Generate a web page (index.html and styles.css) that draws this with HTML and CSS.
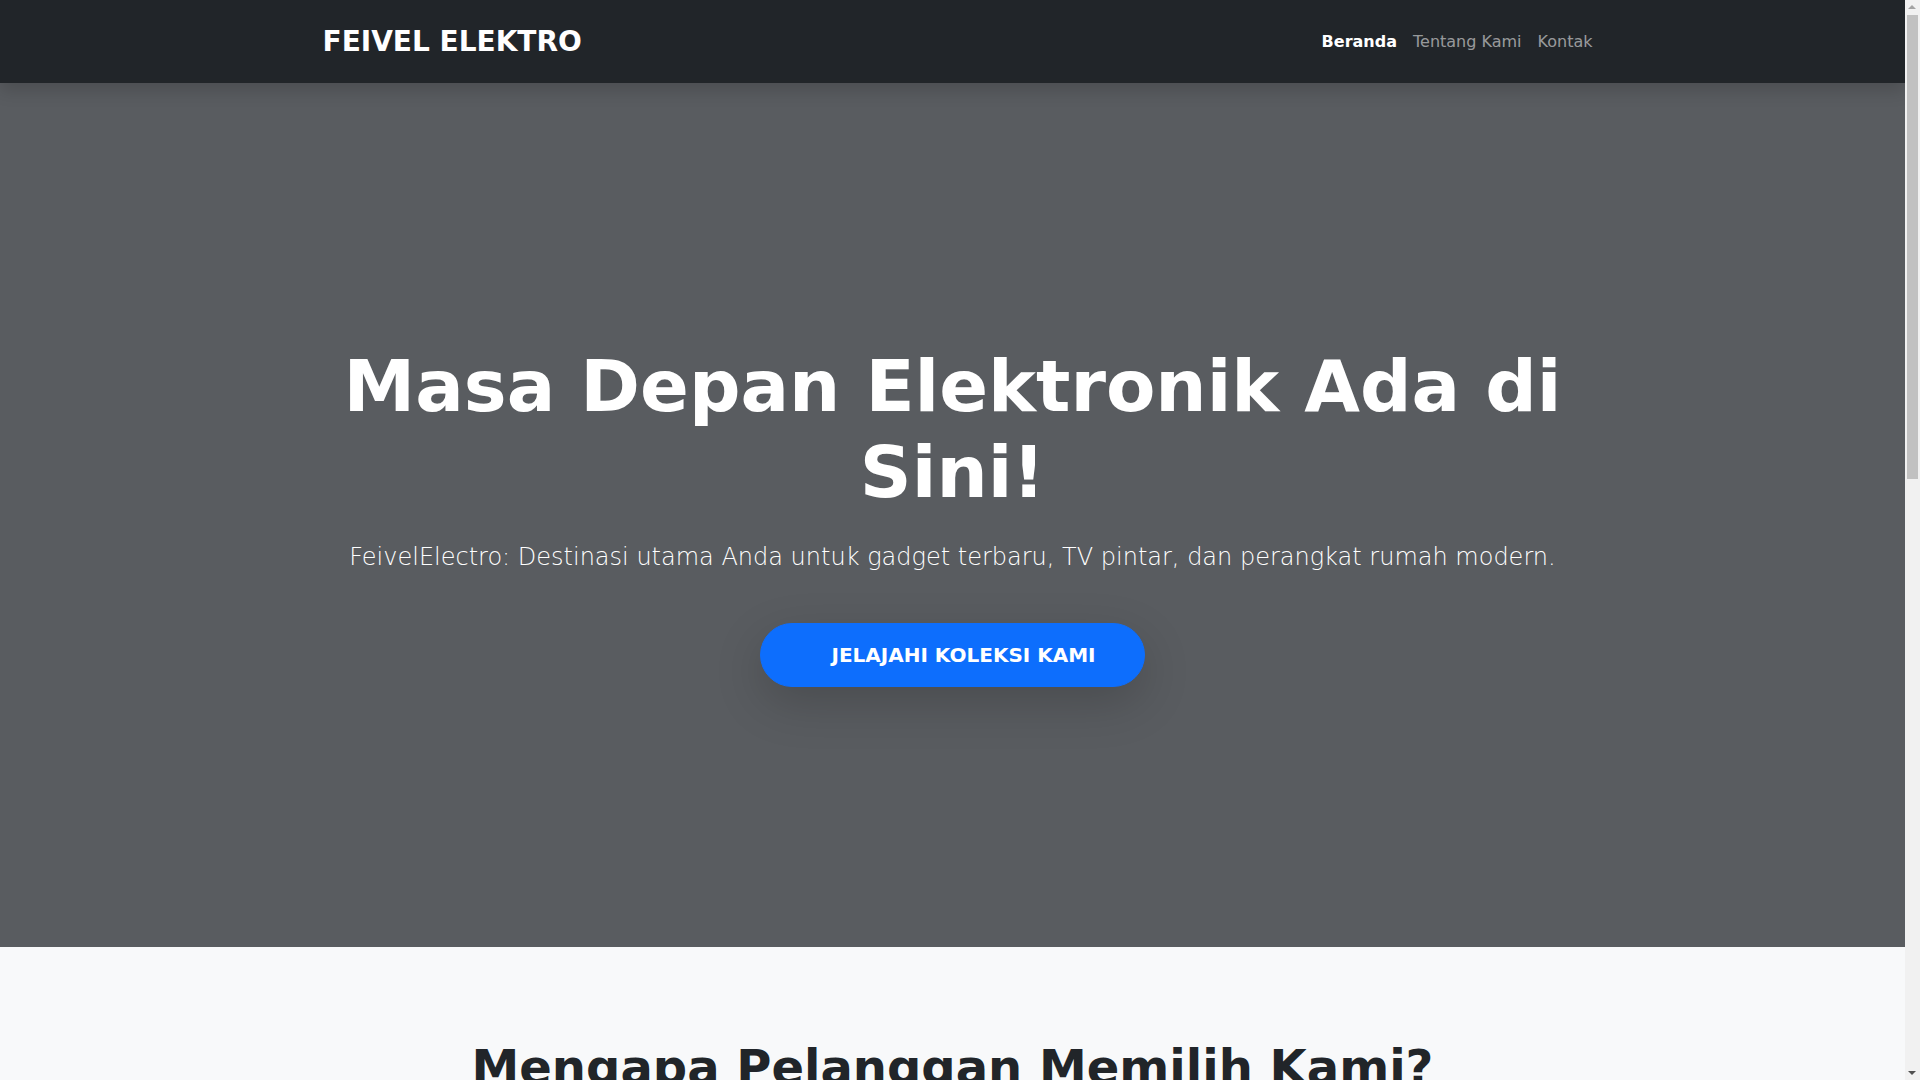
FILE: index.html
```html
<!DOCTYPE html>
<html lang="id">
<head>
<meta charset="utf-8">
<title>Feivel Elektro</title>
<link rel="stylesheet" href="styles.css">
</head>
<body>
<nav class="navbar">
  <div class="container nav-inner">
    <a class="brand" href="#">FEIVEL ELEKTRO</a>
    <ul class="nav-links">
      <li><a class="nav-link active" href="#">Beranda</a></li>
      <li><a class="nav-link" href="#">Tentang Kami</a></li>
      <li><a class="nav-link" href="#">Kontak</a></li>
    </ul>
  </div>
</nav>

<header class="hero">
  <div class="container hero-inner">
    <h1 class="hero-title">Masa Depan Elektronik Ada di Sini!</h1>
    <p class="hero-lead">FeivelElectro: Destinasi utama Anda untuk gadget terbaru, TV pintar, dan perangkat rumah modern.</p>
    <a class="hero-btn" href="#">JELAJAHI KOLEKSI KAMI</a>
  </div>
</header>

<section class="features">
  <div class="container">
    <h2 class="section-title">Mengapa Pelanggan Memilih Kami?</h2>
    <div class="feature-grid">
      <div class="feature-card">
        <h3>Produk Original</h3>
        <p>Semua produk kami dijamin 100% original dengan garansi resmi dari distributor.</p>
      </div>
      <div class="feature-card">
        <h3>Pengiriman Cepat</h3>
        <p>Pesanan Anda dikirim dengan cepat dan aman ke seluruh Indonesia.</p>
      </div>
      <div class="feature-card">
        <h3>Layanan Pelanggan</h3>
        <p>Tim kami siap membantu Anda setiap hari untuk semua kebutuhan elektronik.</p>
      </div>
    </div>
  </div>
</section>

<section class="about">
  <div class="container">
    <h2 class="section-title">Tentang Kami</h2>
    <p class="about-text">FeivelElectro hadir untuk memberikan pengalaman belanja elektronik terbaik dengan harga bersaing dan pelayanan ramah.</p>
  </div>
</section>

<footer class="footer">
  <div class="container">
    <p>&copy; 2024 FeivelElectro. Semua hak dilindungi.</p>
  </div>
</footer>

<div class="fake-scrollbar" aria-hidden="true">
  <span class="sb-arrow sb-up"></span>
  <span class="sb-thumb"></span>
  <span class="sb-arrow sb-down"></span>
</div>
</body>
</html>
```

FILE: styles.css
```css
* { box-sizing: border-box; }

html, body {
  margin: 0;
  padding: 0;
}

body {
  font-family: "DejaVu Sans", "Noto Sans", sans-serif;
  font-size: 16px;
  line-height: 1.5;
  color: #212529;
  background: #fff;
  margin-right: 15px;
}

.container {
  max-width: 1320px;
  margin: 0 auto;
  padding: 0 12px;
}

/* NAVBAR */
.navbar {
  background: #212529;
  height: 83px;
  position: relative;
  z-index: 2;
  box-shadow: 0 8px 16px rgba(0, 0, 0, 0.15);
}

.nav-inner {
  height: 100%;
  display: flex;
  align-items: center;
  justify-content: space-between;
}

.brand {
  color: #fff;
  text-decoration: none;
  font-size: 28px;
  font-weight: 700;
  line-height: 42px;
  padding-left: 18px;
}

.nav-links {
  list-style: none;
  display: flex;
  margin: 0;
  padding: 0;
}

.nav-link {
  display: block;
  padding: 8px 8px;
  color: rgba(255, 255, 255, 0.55);
  text-decoration: none;
  font-size: 16px;
}

.nav-link.active {
  color: #fff;
  font-weight: 700;
}

/* HERO */
.hero {
  background: #595c60;
  min-height: 864px;
  display: flex;
  align-items: center;
  justify-content: center;
  color: #fff;
  text-align: center;
}

.hero-inner {
  display: flex;
  flex-direction: column;
  align-items: center;
}

.hero-title {
  font-size: 72px;
  font-weight: 700;
  line-height: 1.2;
  margin: 0 0 24px;
}

.hero-lead {
  font-size: 24px;
  font-weight: 300;
  line-height: 1.5;
  margin: 0 0 48px;
}

.hero-btn {
  display: inline-block;
  background: #0d6efd;
  border: 1px solid #0d6efd;
  color: #fff;
  text-decoration: none;
  font-size: 20px;
  font-weight: 700;
  line-height: 30px;
  padding: 16px 48px 16px 70px;
  border-radius: 50rem;
  box-shadow: 0 16px 48px rgba(0, 0, 0, 0.175);
}

/* FEATURES */
.features {
  background: #f8f9fa;
  padding: 92px 0 96px;
}

.section-title {
  font-size: 48px;
  font-weight: 700;
  line-height: 1.2;
  text-align: center;
  margin: 0 0 64px;
  color: #212529;
}

.feature-grid {
  display: grid;
  grid-template-columns: repeat(3, 1fr);
  gap: 24px;
}

.feature-card {
  background: #fff;
  border-radius: 8px;
  padding: 48px 32px;
  min-height: 320px;
  text-align: center;
  box-shadow: 0 2px 8px rgba(0, 0, 0, 0.075);
}

.feature-card h3 {
  font-size: 24px;
  margin: 0 0 16px;
}

.feature-card p {
  margin: 0;
  color: #6c757d;
}

/* ABOUT */
.about {
  background: #fff;
  padding: 96px 0;
  min-height: 480px;
}

.about-text {
  text-align: center;
  font-size: 20px;
  color: #6c757d;
  max-width: 800px;
  margin: 0 auto;
}

/* FOOTER */
.footer {
  background: #212529;
  color: rgba(255, 255, 255, 0.55);
  text-align: center;
  padding: 32px 0;
}

.footer p {
  margin: 0;
}

/* Fake browser scrollbar (overlay on the right edge) */
.fake-scrollbar {
  position: fixed;
  top: 0;
  right: 0;
  width: 15px;
  height: 100vh;
  background: #f1f1f1;
  z-index: 10;
}

.sb-thumb {
  position: absolute;
  top: 15px;
  left: 2px;
  width: 11px;
  height: 464px;
  background: #c1c1c1;
}

.sb-arrow {
  position: absolute;
  left: 3px;
  width: 0;
  height: 0;
  border-left: 4.5px solid transparent;
  border-right: 4.5px solid transparent;
}

.sb-up {
  top: 5px;
  border-bottom: 4.5px solid #a3a3a3;
}

.sb-down {
  bottom: 5px;
  border-top: 4.5px solid #505050;
}
```
